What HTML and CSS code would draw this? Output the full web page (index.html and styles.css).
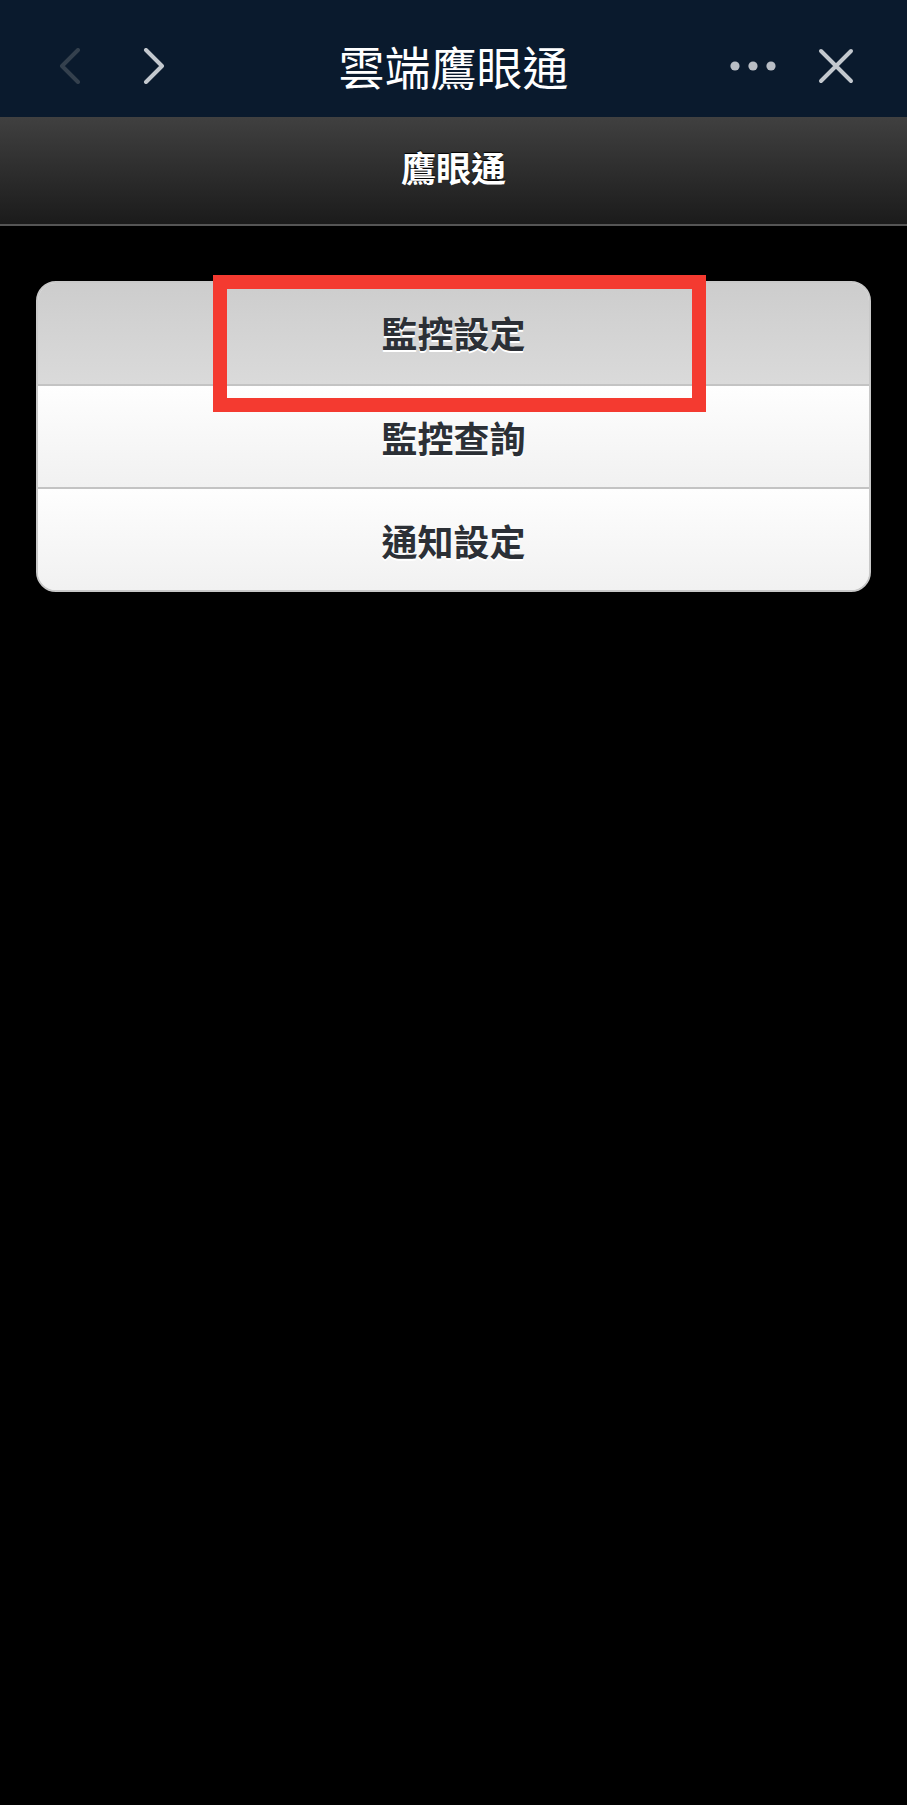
FILE: index.html
```html
<!DOCTYPE html>
<html>
<head>
    <meta charset="utf-8">
    <title>雲端鷹眼通</title>
    <link rel="stylesheet" href="styles.css">
</head>
<body>
    <div class="topbar">
        <div class="nav_left">
            <svg class="ico_back" width="22" height="36" viewBox="0 0 22 36"><polyline points="19,2 3,18 19,34" fill="none" stroke="#34404d" stroke-width="4" stroke-linecap="round" stroke-linejoin="round"/></svg>
            <svg class="ico_fwd" width="22" height="36" viewBox="0 0 22 36"><polyline points="3,2 19,18 3,34" fill="none" stroke="#c3c8ce" stroke-width="4" stroke-linecap="round" stroke-linejoin="round"/></svg>
        </div>
        <div class="title">雲端鷹眼通</div>
        <div class="nav_right">
            <svg class="ico_more" width="48" height="12" viewBox="0 0 48 12"><circle cx="6" cy="6" r="4.6" fill="#b9bec5"/><circle cx="24" cy="6" r="4.6" fill="#b9bec5"/><circle cx="42" cy="6" r="4.6" fill="#b9bec5"/></svg>
            <svg class="ico_close" width="36" height="36" viewBox="0 0 36 36"><path d="M3 3 L33 33 M33 3 L3 33" fill="none" stroke="#c3c8ce" stroke-width="4" stroke-linecap="round"/></svg>
        </div>
    </div>
    <div class="subbar">鷹眼通</div>
    <div class="content">
        <ul class="menu">
            <li class="on">監控設定</li>
            <li>監控查詢</li>
            <li>通知設定</li>
        </ul>
        <div class="mark"></div>
    </div>
</body>
</html>
```

FILE: styles.css
```css
body { margin: 0; background: #000; min-height: 1805px; font-family: "Noto Sans CJK TC", "Noto Sans", sans-serif; }
.topbar { height: 117px; box-sizing: border-box; padding-top: 14px; background: #0a1a2d; display: grid; grid-template-columns: 1fr auto 1fr; align-items: center; }
.nav_left { display: flex; align-items: center; padding-left: 59px; gap: 62px; }
.nav_right { display: flex; align-items: center; justify-content: flex-end; padding-right: 53px; gap: 41px; }
.title { color: #fff; font-size: 46px; line-height: 1; padding-bottom: 2px; }
.subbar { height: 107px; line-height: 100px; text-align: center; color: #fff; font-size: 35px; font-weight: bold; background: linear-gradient(#404040, #1b1b1b); border-bottom: 2px solid #555; text-shadow: 0 -1px 1px #000; }
.content { position: relative; padding: 55px 36px 0 36px; }
.menu { list-style: none; margin: 0; padding: 0; border: 2px solid #c9c9c9; border-radius: 20px; overflow: hidden; background: #f4f4f4; }
.menu li { height: 101px; display: flex; align-items: center; justify-content: center; font-size: 36px; font-weight: bold; color: #2c3036; text-shadow: 0 2px 0 #fff; background: linear-gradient(#fefefe, #f1f1f1); border-top: 2px solid #c3c3c3; }
.menu li:first-child { border-top: 0 none; }
.menu li.on { background: linear-gradient(#cdcdcd, #dadada); padding-bottom: 4px; box-sizing: border-box; }
.mark { position: absolute; left: 213px; top: 49px; width: 493px; height: 137px; box-sizing: border-box; border: 14px solid #f43a30; }
```
